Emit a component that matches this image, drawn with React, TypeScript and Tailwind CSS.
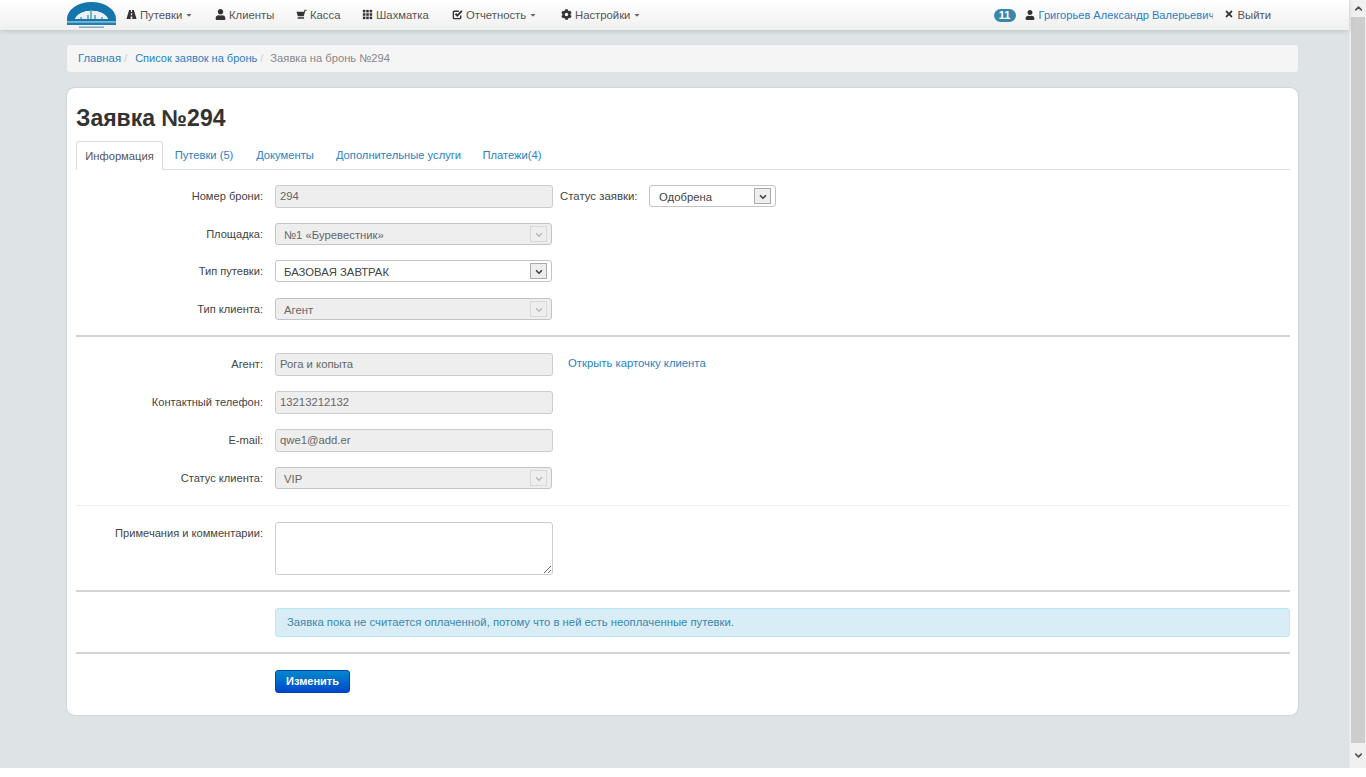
import { FaCaretDown, FaCog, FaTimes, FaUser } from "react-icons/fa";
import { ChevronDown, ChevronUp } from "lucide-react";
import type { ComponentType, ReactNode } from "react";

const font = "font-['Liberation_Sans',Arial,sans-serif]";

type IconProps = { className?: string };

function RoadIcon({ className }: IconProps) {
  return (
    <svg viewBox="0 0 12 12" className={className} fill="currentColor" aria-hidden>
      <path d="M3.4 1H5.4V3.4H6.6V1H8.6L11.5 11H6.9V8.2H5.1V11H0.5Z M5.3 4.6H6.7V6.8H5.3Z" fillRule="evenodd" />
    </svg>
  );
}

function CartIcon({ className }: IconProps) {
  return (
    <svg viewBox="0 0 12 12" className={className} fill="currentColor" aria-hidden>
      <path d="M0.5 3H8.6L9.4 0.8H11.5V2H10.2L8.4 8H2Z" />
      <rect x="1.8" y="9" width="7" height="1.6" />
    </svg>
  );
}

function GridIcon({ className }: IconProps) {
  return (
    <svg viewBox="-1 -1 13 13" className={className} fill="currentColor" aria-hidden>
      {[0, 4, 8].flatMap((y) =>
        [0, 4, 8].map((x) => <rect key={`${x}-${y}`} x={x} y={y} width="3" height="3" />),
      )}
    </svg>
  );
}

function CheckIcon({ className }: IconProps) {
  return (
    <svg viewBox="0 0 12 12" className={className} fill="none" stroke="currentColor" aria-hidden>
      <path d="M9.5 7V9.5A1 1 0 0 1 8.5 10.5H2.5A1 1 0 0 1 1.5 9.5V3.5A1 1 0 0 1 2.5 2.5H7.5" strokeWidth="1.5" />
      <path d="M3.8 5.2L5.8 7.2L10.8 2" strokeWidth="2" />
    </svg>
  );
}

type NavItem = { label: string; icon: ComponentType<IconProps>; caret?: boolean; width: string };

const navItems: NavItem[] = [
  { label: "Путевки", icon: RoadIcon, caret: true, width: "w-[89px]" },
  { label: "Клиенты", icon: FaUser, width: "w-[81px]" },
  { label: "Касса", icon: CartIcon, width: "w-[66px]" },
  { label: "Шахматка", icon: GridIcon, width: "w-[90px]" },
  { label: "Отчетность", icon: CheckIcon, caret: true, width: "w-[109px]" },
  { label: "Настройки", icon: FaCog, caret: true, width: "w-[100px]" },
];

function Logo() {
  return (
    <svg width="49" height="30" viewBox="0 0 49 30" className="shrink-0" aria-hidden>
      <path d="M0 19 A24.5 17 0 0 1 49 19 L41 19 A17 11 0 0 0 8 19 Z" fill="#1476ac" />
      <path d="M8 19 A17 11 0 0 1 41 19 Z" fill="#e9f1f5" />
      <path d="M21 19 V15 M24 19 V11 M28 19 V15 M14 19 V17 M35 19 V17" stroke="#2f86b4" strokeWidth="1.2" />
      <rect x="0" y="19" width="49" height="2" fill="#1476ac" />
      <rect x="0" y="21" width="49" height="1.5" fill="#7db6d3" />
      <rect x="0" y="22.5" width="49" height="2.5" fill="#1f7fb2" />
      <rect x="12" y="26.5" width="25" height="1.5" fill="#7fa9c2" />
    </svg>
  );
}

function Navbar() {
  return (
    <header className="relative z-10 flex h-[30px] items-center bg-gradient-to-b from-white to-[#f0f0f0] pl-[67px] shadow-[0_1px_5px_rgba(0,0,0,0.15)]">
      <Logo />
      <nav className="ml-[10px] flex items-center text-[11.3px] text-[#555]">
        {navItems.map(({ label, icon: Icon, caret, width }) => (
          <a key={label} className={`flex items-center ${width}`}>
            <Icon className="mb-[2px] mr-[3px] h-[11px] w-[11px] shrink-0 text-[#333]" />
            <span className="pt-px">{label}</span>
            {caret ? <FaCaretDown className="ml-[3px] h-[8px] w-[8px] text-[#666]" /> : null}
          </a>
        ))}
      </nav>
      <div className="ml-auto flex items-center pr-[78px] text-[11.3px]">
        <span className="flex h-[13px] w-[22px] items-center justify-center rounded-[7px] bg-[#3a87ad] text-[11px] font-bold text-white">
          11
        </span>
        <FaUser className="ml-[9px] mr-[4px] h-[10px] w-[10px] text-[#333]" />
        <a className="w-[174px] overflow-hidden whitespace-nowrap pt-px text-[11.1px] text-[#2a7fc4]">
          Григорьев Александр Валерьевич
        </a>
        <FaTimes className="mb-[2px] ml-[11px] mr-[4px] h-[10px] w-[10px] text-[#333]" />
        <a className="pt-px text-[#555]">Выйти</a>
      </div>
    </header>
  );
}

function Arrow({ disabled }: { disabled?: boolean }) {
  return (
    <span
      className={`flex h-[16px] w-[17px] items-center justify-center border bg-[#eee] ${
        disabled ? "border-[#d8d8d8] text-[#bbb]" : "border-[#aaa] text-[#444]"
      }`}
    >
      <ChevronDown className="mt-[2px] h-[10px] w-[10px]" strokeWidth={4} />
    </span>
  );
}

function SelectBox({ value, disabled, className }: { value: string; disabled?: boolean; className: string }) {
  return (
    <div
      className={`flex h-[22px] items-center justify-between rounded-[3px] border border-[#c4c4c4] pl-[8px] pr-[4px] text-[11.3px] ${className} ${
        disabled ? "bg-[#eee] text-[#666]" : "bg-white text-[#444]"
      }`}
    >
      <span className="pt-[3px]">{value}</span>
      <Arrow disabled={disabled} />
    </div>
  );
}

function ReadOnlyInput({ value }: { value: string }) {
  return (
    <input
      readOnly
      value={value}
      className="h-[23px] w-[278px] rounded-[3px] border border-[#ccc] bg-[#eee] px-[4px] pb-[2px] text-[11.3px] text-[#666] outline-none"
    />
  );
}

function Row({ label, children, className = "mb-[15px]" }: { label: string; children: ReactNode; className?: string }) {
  return (
    <div className={`flex items-start ${className}`}>
      <label className="w-[187px] shrink-0 pt-[3px] text-right text-[11.1px] text-[#444]">{label}</label>
      <div className="ml-[12px] flex items-start">{children}</div>
    </div>
  );
}

function Tabs() {
  const tabs = [
    { label: "Путевки (5)", width: "w-[82px]" },
    { label: "Документы", width: "w-[80px]" },
    { label: "Дополнительные услуги", width: "w-[147px]" },
    { label: "Платежи(4)", width: "w-[80px]" },
  ];
  return (
    <div className="flex h-[29px] border-b border-[#ddd] text-[11.2px]">
      <div className="relative flex h-[29px] w-[87px] items-center justify-center rounded-t-[3px] border border-[#ddd] border-b-white bg-white pt-px text-[#555]">
        Информация
      </div>
      {tabs.map((tab) => (
        <a key={tab.label} className={`flex items-center justify-center pt-px text-[#2a7fc4] ${tab.width}`}>
          {tab.label}
        </a>
      ))}
    </div>
  );
}

function RequestForm() {
  return (
    <section className="mt-[16px] h-[627px] rounded-[8px] bg-white pl-[9px] pr-[8px] pt-[17px] shadow-[0_0_2px_rgba(0,0,0,0.2)]">
      <h1 className="mb-[10px] h-[26px] text-[23px] font-bold leading-[26px] text-[#333]">Заявка №294</h1>
      <Tabs />

      <div className="mt-[15px]">
        <Row label="Номер брони:">
          <ReadOnlyInput value="294" />
          <span className="ml-[7px] w-[89px] pt-[3px] text-[11.4px] text-[#444]">Статус заявки:</span>
          <SelectBox value="Одобрена" className="w-[127px] !pl-[9px]" />
        </Row>
        <Row label="Площадка:">
          <SelectBox value="№1 «Буревестник»" disabled className="w-[277px]" />
        </Row>
        <Row label="Тип путевки:" className="mb-[16px]">
          <SelectBox value="БАЗОВАЯ ЗАВТРАК" className="w-[277px]" />
        </Row>
        <Row label="Тип клиента:" className="mb-0">
          <SelectBox value="Агент" disabled className="w-[277px]" />
        </Row>
      </div>

      <hr className="mb-[16px] mt-[15px] h-[2px] border-0 bg-[#d4d4d4]" />

      <Row label="Агент:">
        <ReadOnlyInput value="Рога и копыта" />
        <a className="ml-[15px] pt-[2px] text-[11.3px] text-[#2a7fc4]">Открыть карточку клиента</a>
      </Row>
      <Row label="Контактный телефон:">
        <ReadOnlyInput value="13213212132" />
      </Row>
      <Row label="E-mail:">
        <ReadOnlyInput value="qwe1@add.er" />
      </Row>
      <Row label="Статус клиента:" className="mb-0">
        <SelectBox value="VIP" disabled className="w-[277px]" />
      </Row>

      <hr className="mb-[16px] mt-[16px] h-px border-0 bg-[#eee]" />

      <Row label="Примечания и комментарии:" className="mb-0">
        <textarea className="block h-[53px] w-[278px] rounded-[3px] border border-[#ccc] bg-white outline-none" />
      </Row>

      <hr className="mb-[16px] mt-[15px] h-[2px] border-0 bg-[#d4d4d4]" />

      <div className="ml-[199px] flex h-[29px] items-center rounded-[3px] border border-[#bce8f1] bg-[#d9edf7] pl-[11px] text-[11.3px] text-[#3a87ad]">
        Заявка пока не считается оплаченной, потому что в ней есть неоплаченные путевки.
      </div>

      <hr className="mb-[16px] mt-[15px] h-[2px] border-0 bg-[#d4d4d4]" />

      <button className="ml-[199px] flex h-[23px] w-[75px] items-center justify-center rounded-[3px] border border-[#0044a8] bg-gradient-to-b from-[#0088cc] to-[#0044cc] text-[11px] font-bold text-white">
        Изменить
      </button>
    </section>
  );
}

function Scrollbar() {
  return (
    <div className="flex w-[17px] shrink-0 flex-col border-l border-[#e8e8e8] bg-[#f0f0f0]">
      <div className="flex h-[17px] items-center justify-center text-[#505050]">
        <ChevronUp className="h-[11px] w-[11px]" strokeWidth={3.5} />
      </div>
      <div className="mx-[1px] flex-1 bg-[#cdcdcd]" />
      <div className="flex h-[25px] items-center justify-center text-[#505050]">
        <ChevronDown className="h-[11px] w-[11px]" strokeWidth={3.5} />
      </div>
    </div>
  );
}

export default function App() {
  return (
    <div className={`${font} h-[777px] overflow-hidden bg-white`}>
      <div className="flex h-[768px]">
        <div className="min-w-0 flex-1 bg-[#dee3e6]">
          <Navbar />
          <main className="ml-[67px] mr-[51px] pt-[15px]">
            <nav className="flex h-[27px] items-center rounded-[3px] bg-[#f5f5f5] pl-[11px] text-[11.3px]">
              <a className="text-[#2a7fc4]">Главная</a>
              <span className="ml-[3px] mr-[8px] text-[#ccc]">/</span>
              <a className="text-[11px] text-[#2a7fc4]">Список заявок на бронь</a>
              <span className="ml-[3px] mr-[7px] text-[#ccc]">/</span>
              <span className="text-[11.2px] text-[#888]">Заявка на бронь №294</span>
            </nav>
            <RequestForm />
          </main>
        </div>
        <Scrollbar />
      </div>
    </div>
  );
}
